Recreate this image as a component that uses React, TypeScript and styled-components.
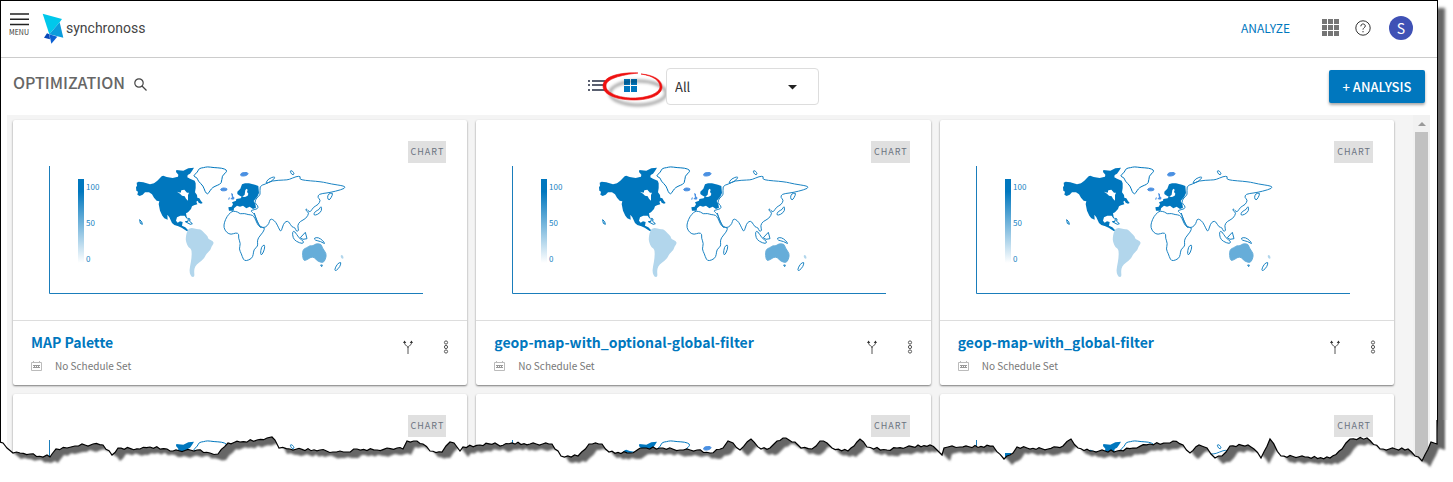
import React from "react";
import styled, { createGlobalStyle } from "styled-components";

const Global = createGlobalStyle`
  * { box-sizing: border-box; }
  body {
    margin: 0;
    background: #fff;
    font-family: "Noto Sans CJK SC", "Noto Sans", sans-serif;
    color: #555;
  }
  button, select { font-family: inherit; }
`;

const Page = styled.div`
  position: relative;
  height: 100vh;
  overflow: hidden;
  padding-right: 15px;
`;

const Sheet = styled.div`
  height: 100%;
  display: flex;
  flex-direction: column;
  border: 1px solid #000;
  border-bottom: 0;
  background: #fff;
  box-shadow: 7px 8px 3px #666;
`;

const Header = styled.header`
  display: flex;
  align-items: center;
  flex: none;
  height: 57px;
  padding: 0 24px 2px 5px;
  border-bottom: 1px solid #ccc;
`;

const IconButton = styled.button`
  display: flex;
  align-items: center;
  justify-content: center;
  flex: none;
  padding: 0;
  border: 0;
  background: none;
  color: inherit;
  cursor: pointer;
`;

const MenuButton = styled(IconButton)`
  flex-direction: column;
  gap: 2px;
  width: 26px;
  padding-bottom: 8px;
  font-size: 7px;
  line-height: 8px;
  color: #333;
`;

const Brand = styled.a`
  display: flex;
  align-items: center;
  gap: 2px;
  margin-left: 10px;
  text-decoration: none;
  color: #444;
  font: 14px/20px Roboto, "Liberation Sans", sans-serif;
`;

const HeaderNav = styled.nav`
  display: flex;
  align-items: center;
  gap: 15px;
  margin-left: auto;
`;

const NavLink = styled.a`
  margin-right: 17px;
  font-size: 12px;
  line-height: 20px;
  color: #0077be;
  text-decoration: none;
`;

const Avatar = styled.button`
  width: 24px;
  height: 24px;
  margin-left: 3px;
  padding: 0;
  border: 0;
  border-radius: 50%;
  background: #3f51b5;
  color: #fff;
  font-size: 14px;
  line-height: 24px;
`;

const Toolbar = styled.div`
  display: grid;
  grid-template-columns: 1fr auto 1fr;
  align-items: center;
  flex: none;
  height: 57px;
  padding: 0 12px;
`;

const TitleGroup = styled.div`
  display: flex;
  align-items: flex-end;
  gap: 9px;
  padding-bottom: 9px;
`;

const Title = styled.h1`
  margin: 0;
  font-size: 16px;
  line-height: 24px;
  font-weight: 500;
  color: #666;
`;

const SearchButton = styled(IconButton)`
  height: 20px;
`;

const ViewTools = styled.div`
  display: flex;
  align-items: center;
  padding-right: 32px;
`;

const ViewButtons = styled.div`
  display: flex;
  align-items: center;
  padding-bottom: 2px;
`;

const GridToggle = styled(IconButton)`
  position: relative;
  margin: 0 29px 0 18px;
`;

const Highlight = styled.svg`
  position: absolute;
  left: -24px;
  top: -8px;
  pointer-events: none;
`;

const SelectBox = styled.div`
  position: relative;
  svg {
    position: absolute;
    right: 22px;
    top: 17px;
    pointer-events: none;
  }
`;

const Select = styled.select`
  display: block;
  appearance: none;
  width: 153px;
  height: 37px;
  padding: 0 8px;
  border: 1px solid #ddd;
  border-radius: 4px;
  background: #fff;
  color: #333;
  font-size: 13px;
`;

const PrimaryButton = styled.button`
  justify-self: end;
  width: 96px;
  height: 33px;
  padding: 0;
  border: 0;
  border-radius: 2px;
  background: #0077be;
  color: #fff;
  font-size: 13px;
  line-height: 33px;
  font-weight: 500;
  box-shadow: 0 2px 3px rgba(0, 0, 0, 0.35);
`;

const Content = styled.main`
  display: flex;
  flex: 1;
  min-height: 0;
  margin: 0 7px 0 6px;
  background: #f4f4f4;
`;

const Grid = styled.div`
  flex: 1;
  min-width: 0;
  display: grid;
  grid-template-columns: repeat(3, minmax(0, 1fr));
  align-content: start;
  gap: 9px;
  padding: 5px 19px 0 6px;
  overflow: hidden;
`;

const Card = styled.article`
  background: #fff;
  border-radius: 2px;
  box-shadow: 0 1px 2px rgba(0, 0, 0, 0.5);
`;

const Preview = styled.div`
  position: relative;
  height: 201px;
  padding: 46px 43px 0 36px;
  border-bottom: 1px solid #ddd;
`;

const Tag = styled.span`
  position: absolute;
  right: 21px;
  top: 21px;
  height: 22px;
  padding: 0 2px 0 3px;
  background: #e0e0e0;
  color: #6b7380;
  font-size: 9px;
  line-height: 21px;
  letter-spacing: 1px;
`;

const CardFooter = styled.div`
  display: flex;
  align-items: flex-start;
  height: 64px;
  padding: 11px 18px 0 18px;
`;

const CardText = styled.div`
  flex: 1;
  min-width: 0;
`;

const CardTitle = styled.a`
  display: block;
  font-size: 14px;
  line-height: 20px;
  font-weight: 700;
  color: #0077be;
  text-decoration: none;
  white-space: nowrap;
`;

const Schedule = styled.div`
  display: flex;
  align-items: center;
  gap: 13px;
  margin-top: 5px;
  font-size: 10px;
  line-height: 18px;
  color: #777;
`;

const CardActions = styled.div`
  display: flex;
  gap: 30px;
  padding-top: 8px;
`;

const Scrollbar = styled.div`
  flex: none;
  display: flex;
  flex-direction: column;
  align-items: center;
  width: 17px;
  background: #f1f1f1;
`;

const ScrollArrow = styled.div`
  width: 0;
  height: 0;
  margin: 7px 0 6px;
  border: 4px solid transparent;
  border-top: 0;
  border-bottom-color: #9a9a9a;
`;

const ScrollThumb = styled.div`
  flex: 1;
  width: 13px;
  background: #c1c1c1;
`;

const TornEdge = styled.svg`
  position: absolute;
  left: 0;
  bottom: 0;
  width: 100%;
  height: 62px;
  pointer-events: none;
`;

type Point = [number, number];

const toPoints = (s: string): Point[] =>
  s.trim().split(/\s+/).map((p) => p.split(",").map(Number) as Point);

/** Closed outline whose corners are rounded through the edge midpoints. */
function blob(s: string): string {
  const pts = toPoints(s);
  const mid = (a: Point, b: Point) => `${(a[0] + b[0]) / 2},${(a[1] + b[1]) / 2}`;
  const last = pts[pts.length - 1];
  return (
    `M${mid(last, pts[0])}` +
    pts.map((p, i) => `Q${p[0]},${p[1]} ${mid(p, pts[(i + 1) % pts.length])}`).join("") +
    "Z"
  );
}

const poly = (s: string) => `M${toPoints(s).map((p) => p.join(",")).join("L")}Z`;

const NORTH_AMERICA =
  poly("20,74 26,71 40,73 60,79 72,76 82,68 95,55 100,53 110,57 128,60 144,56 145,50 138,42 139,36 160,38 175,31 192,29 186,39 180,47 173,51 172,58 180,62 194,68 197,76 197,90 195,103 201,111 202,119 208,121 213,129 218,135 213,137 206,134 203,128 199,131 202,139 192,142 186,145 183,153 174,163 168,166 170,177 175,183 169,181 164,173 151,173 141,178 138,188 143,194 150,190 158,192 156,203 166,208 176,218 170,219 155,209 145,205 133,201 126,195 118,178 112,170 113,185 103,181 97,173 90,158 86,138 88,130 80,128 72,119 66,109 57,103 45,103 38,110 29,114 22,110 24,101 19,98 18,88 21,83") +
  poly("141,101 152,104 154,97 163,95 171,104 177,104 174,111 174,128 168,122 164,115 156,113 150,107");
const SOUTH_AMERICA = blob("174,214 184,209 202,214 212,213 224,226 234,236 234,243 250,249 251,258 244,266 242,276 228,288 223,302 206,314 195,325 192,340 194,357 184,357 178,342 180,325 185,300 185,274 175,268 168,252 167,240 170,224");
const GREENLAND = blob("188,55 203,42 207,31 221,29 232,26 252,29 275,30 291,36 288,44 276,53 275,76 262,82 248,88 240,98 233,110 225,101 220,84 204,69 201,58");

const EUROPE =
  poly("10,148 20,146 24,139 21,133 33,128 34,123 47,121 50,116 42,112 37,108 37,101 46,92 51,79 60,76 72,76 90,80 100,84 102,105 97,116 86,129 91,138 93,149 84,153 74,146 64,151 54,143 45,146 36,143 27,151 26,158 12,158") +
  poly("61,97 64,92 68,95 66,102 70,107 68,113 60,117 52,116 59,110 60,103");
const AFRICA = blob("17,163 25,159 39,162 45,168 58,166 69,170 83,171 90,181 96,196 104,208 120,208 115,222 99,240 97,253 99,264 86,275 85,290 80,302 63,309 55,305 49,287 42,273 47,257 40,240 42,228 33,224 18,230 5,224 -4,209 -2,193 6,175");
const ASIA = blob("103,84 120,79 140,68 179,66 192,65 214,55 228,55 222,66 290,71 318,78 359,84 361,91 331,100 306,105 281,108 278,119 287,126 280,140 265,147 256,163 249,158 243,151 243,159 253,164 243,182 225,190 217,203 222,218 214,221 210,208 201,208 191,190 183,190 175,198 168,223 161,210 153,193 143,184 135,183 132,197 121,209 106,208 96,189 90,171 82,163 76,157 99,153 99,143 88,134 95,119 107,111");
const RED_SEA = "M88,165C92,183 100,199 107,209";

function WorldChart({ labels }: { labels: boolean }) {
  const id = React.useId();
  return (
    <svg viewBox="87 108 1125 384" width="375" height="128" role="img" aria-label="World map chart">
      <defs>
        <linearGradient id={id} x1="0" y1="0" x2="0" y2="1">
          <stop offset="0" stopColor="#0077be" />
          <stop offset="0.15" stopColor="#0077be" />
          <stop offset="1" stopColor="#fff" />
        </linearGradient>
      </defs>
      <path d="M88.500,108V490.500H1209" fill="none" stroke="#1a7dbb" strokeWidth="3" />
      <rect x="174" y="147" width="18" height="252" fill={`url(#${id})`} />
      {labels && (
        <g fill="#1a83c3" fontSize="24">
          <text x="198" y="180">100</text>
          <text x="198" y="288">50</text>
          <text x="198" y="395">0</text>
        </g>
      )}
      <g transform="translate(330 84)" fill="none" stroke="#0077be" strokeWidth="3">
        <path d={NORTH_AMERICA} fill="#0077be" fillRule="evenodd" stroke="none" />
        <path d={SOUTH_AMERICA} fill="#b2d6ec" stroke="none" />
        <path d={GREENLAND} />
        <path d={poly("166,191 174,190 175,181 180,183 179,190 187,197 181,199")} />
        <path d={poly("29,185 35,191 37,199 31,196")} />
        <path d={blob("270,94 279,89 293,92 289,98 276,99")} fill="#4a90e2" stroke="#4a90e2" />
      </g>
      <g transform="translate(615 84)" fill="none" stroke="#1a83c3" strokeWidth="3" strokeLinejoin="round">
        <path d={EUROPE} fill="#0077be" fillRule="evenodd" stroke="none" />
        <path d={AFRICA} />
        <path d={ASIA} />
        <path d={RED_SEA} />
        <path d={blob("121,77 130,62 151,55 146,65 131,74")} />
        <path d={blob("194,38 202,38 209,49 201,51")} />
        <path d={blob("307,120 310,107 325,104 318,120 312,127")} />
        <path d={blob("265,172 270,160 283,155 288,143 291,158 278,170")} />
        <path d={blob("106,289 109,266 119,259 119,273 111,291")} />
        <path d={blob("202,221 209,219 222,241 237,250 233,258 213,250 204,240")} />
        <path d={poly("226,239 241,223 246,242 234,244")} />
        <path d={blob("267,240 280,238 294,248 301,259 287,250 270,247")} />
        <path d={blob("328,337 336,318 349,311 345,326 334,338")} />
        <path d={poly("287,321 292,321 290,326")} />
        <path d={blob("232,275 246,269 254,263 264,264 272,257 289,258 291,269 305,287 301,305 294,315 277,309 268,298 258,297 247,305 234,309")} fill="#66add9" stroke="#66add9" />
        <path d={blob("346,292 353,290 357,302 349,302")} fill="#b2d6ec" stroke="none" />
        <path d={blob("46,50 50,44 69,43 69,50 60,54 48,54")} fill="#4a90e2" stroke="#4a90e2" />
        <path d={poly("18,105 24,108 24,115 29,120 25,125 16,123 21,118")} fill="#4a90e2" stroke="none" />
        <path d={poly("10,120 15,117 14,124 9,126")} fill="#7ab0ea" stroke="none" />
      </g>
    </svg>
  );
}

/** A card without a title is one that only peeks out above the torn edge. */
function AnalysisCard({ title }: { title?: string }) {
  return (
    <Card>
      <Preview>
        <WorldChart labels={Boolean(title)} />
        <Tag>CHART</Tag>
      </Preview>
      {title && (
        <CardFooter>
          <CardText>
            <CardTitle href="#">{title}</CardTitle>
            <Schedule>
              <svg width="11" height="10" fill="none" stroke="#bbb">
                <path d="M0.500,1.500H10.500V9.500H0.500ZM2.500,0V2M8.500,0V2" />
                <path d="M2,4.500H9M2,6.500H9M3.500,4V7M5.500,4V7M7.500,4V7" stroke="#999" />
              </svg>
              No Schedule Set
            </Schedule>
          </CardText>
          <CardActions>
            <IconButton aria-label="Fork">
              <svg width="10" height="14" fill="none" stroke="#555">
                <path d="M1.500,1V3C1.500,6 5,5 5,8V14M8.500,1V3C8.500,6 5,5 5,8" />
                <path d="M0,3L1.500,0.500L3.300,3ZM6.700,3L8.500,0.500L10,3Z" fill="#333" stroke="none" />
              </svg>
            </IconButton>
            <IconButton aria-label="More options">
              <svg width="6" height="14" fill="none" stroke="#555">
                <circle cx="3" cy="2.500" r="1.600" />
                <circle cx="3" cy="7" r="1.600" />
                <circle cx="3" cy="11.500" r="1.600" />
              </svg>
            </IconButton>
          </CardActions>
        </CardFooter>
      )}
    </Card>
  );
}

const TEAR = toPoints(`0,442 3,443 7,448 13,453 20,453 30,454 43,457 47,455 50,457 52,454 56,449 67,448 75,446 82,444
88,446 93,444 103,445 112,455 118,448 140,449 150,447 167,449 173,451 197,450 210,453 218,454 228,443 240,442 257,440
267,438 272,437 275,440 279,448 290,449 320,450 333,452 347,452 357,449 377,450 397,448 403,449 407,441 417,441 423,444
430,451 442,452 450,442 454,443 460,451 463,447 480,445 495,443 500,446 512,443 530,444 552,444 561,456 578,456 589,444
602,444 609,452 630,453 643,448 663,448 680,450 697,450 710,453 723,448 728,441 733,443 740,450 751,439 761,449 770,448
777,441 783,438 795,442 801,448 812,449 820,441 827,443 832,448 848,451 860,439 867,447 887,450 897,448 930,445 937,450
942,455 944,448 952,446 960,447 993,446 1004,459 1013,453 1017,447 1027,448 1048,449 1063,446 1071,439 1078,448 1090,451
1117,451 1133,448 1150,444 1167,443 1173,441 1183,445 1190,453 1199,445 1207,448 1215,458 1222,456 1230,446 1248,445
1254,449 1261,458 1270,439 1281,456 1305,457 1330,458 1342,449 1350,439 1367,438 1380,449 1408,449 1422,461 1431,442 1437,444`);

/** Adds a small repeatable roughness between the main points of the tear. */
function roughen(points: Point[]): string {
  const out: string[] = [];
  const steps = [0, -1, 0, 1, -1, 1, 0, 1, -1, 0, 1];
  let n = 0;
  points.forEach(([x, y], i) => {
    out.push(`${x},${y - 420}`);
    const next = points[i + 1];
    if (!next) return;
    const count = Math.floor((next[0] - x) / 3);
    for (let k = 1; k < count; k++) {
      const t = k / count;
      out.push(`${x + (next[0] - x) * t},${y - 420 + (next[1] - y) * t + steps[n++ % steps.length]}`);
    }
  });
  return out.join("L");
}

function Tear() {
  const line = roughen(TEAR);
  return (
    <TornEdge viewBox="0 0 1453 62" preserveAspectRatio="none" aria-hidden="true">
      <defs>
        <clipPath id="below">
          <path d={`M${line}L1438,0H1453V62H0Z`} />
        </clipPath>
        <filter id="soft" x="-5%" y="-50%" width="110%" height="200%">
          <feGaussianBlur stdDeviation="1.300" />
        </filter>
      </defs>
      <g clipPath="url(#below)">
        <rect width="1453" height="62" fill="#fff" />
        <path d={`M${line}V-30H0Z`} transform="translate(8 6)" fill="#666" filter="url(#soft)" />
      </g>
      <path d={`M${line}V0`} fill="none" stroke="#000" strokeWidth="1.200" />
    </TornEdge>
  );
}

const TITLES = ["MAP Palette", "geop-map-with_optional-global-filter", "geop-map-with_global-filter"];

export default function App() {
  return (
    <>
      <Global />
      <Page>
        <Sheet>
          <Header>
            <MenuButton>
              <svg width="19" height="13" stroke="#222" strokeWidth="1.500" aria-hidden="true">
                <path d="M0,1H19M0,6.200H19M0,11.400H19" />
              </svg>
              MENU
            </MenuButton>
            <Brand href="#">
              <svg width="22" height="31" viewBox="0 0 66 93" aria-hidden="true">
                <path d="M2,2L60,18L53,28L22,64Z" fill="#00c8eb" />
                <path d="M53,28L64,74L22,64Z" fill="#0b9cdc" />
                <path d="M22,64L46,71L28,92Z" fill="#0b5fd3" />
                <path d="M22,64L15,61L6,74L24,79Z" fill="#0849b8" />
              </svg>
              synchronoss
            </Brand>
            <HeaderNav>
              <NavLink href="#">ANALYZE</NavLink>
              <IconButton aria-label="Apps">
                <svg width="18" height="18" fill="#757575">
                  <path d="M0,0h5v5h-5zM6,0h5v5h-5zM12,0h5v5h-5zM0,6h5v5h-5zM6,6h5v5h-5zM12,6h5v5h-5zM0,12h5v5h-5zM6,12h5v5h-5zM12,12h5v5h-5z" />
                </svg>
              </IconButton>
              <IconButton aria-label="Help">
                <svg width="16" height="16" viewBox="0 0 16 16" fill="none" stroke="#333">
                  <circle cx="8" cy="8" r="7.200" />
                  <path d="M5.800,6.300C5.800,3.200 10.300,3.300 10.300,6C10.300,7.600 8,7.900 8,9.600M8,11V12.300" />
                </svg>
              </IconButton>
              <Avatar>S</Avatar>
            </HeaderNav>
          </Header>
          <Toolbar>
            <TitleGroup>
              <Title>OPTIMIZATION</Title>
              <SearchButton aria-label="Search">
                <svg width="13" height="13" fill="none" stroke="#444" strokeWidth="1.200">
                  <circle cx="5" cy="5" r="4.200" />
                  <path d="M8,8L12.500,12.500" />
                </svg>
              </SearchButton>
            </TitleGroup>
            <ViewTools>
              <ViewButtons>
                <IconButton aria-label="List view">
                  <svg width="19" height="13" fill="#5a6070">
                    <path d="M1,1h2v2h-2zM5,1h13v2h-13zM1,5h2v2h-2zM5,5h13v2h-13zM1,10h2v2h-2zM5,10h13v2h-13z" />
                  </svg>
                </IconButton>
                <GridToggle aria-label="Grid view">
                  <svg width="13" height="13" fill="#0077be">
                    <path d="M0,0h6v6h-6zM7,0h6v6h-6zM0,7h6v6h-6zM7,7h6v6h-6z" />
                  </svg>
                  <Highlight width="74" height="44" viewBox="0 0 74 44" fill="none">
                    <defs>
                      <filter id="ring" x="-20%" y="-30%" width="150%" height="170%">
                        <feGaussianBlur stdDeviation="1.800" />
                      </filter>
                    </defs>
                    <ellipse cx="38" cy="22" rx="28" ry="12" stroke="#000" strokeOpacity="0.35" strokeWidth="3" filter="url(#ring)" />
                    <path d="M38,2C18,1 3,6 3,15C3,25 20,29 34,29C50,29 62,24 62,16C62,9 54,4 41,3C54,5 60,10 60,16C59,23 46,27 33,27C19,27 6,22 6,15C6,8 20,4 38,2Z" fill="#ee1111" stroke="#ee1111" strokeWidth="0.600" />
                  </Highlight>
                </GridToggle>
              </ViewButtons>
              <SelectBox>
                <Select aria-label="Filter by type" defaultValue="All">
                  <option>All</option>
                </Select>
                <svg width="9" height="5" fill="#222">
                  <path d="M0,0H9L4.500,4.500Z" />
                </svg>
              </SelectBox>
            </ViewTools>
            <PrimaryButton>+ ANALYSIS</PrimaryButton>
          </Toolbar>
          <Content>
            <Grid>
              {TITLES.map((t) => (
                <AnalysisCard key={t} title={t} />
              ))}
              <AnalysisCard />
              <AnalysisCard />
              <AnalysisCard />
            </Grid>
            <Scrollbar>
              <ScrollArrow />
              <ScrollThumb />
            </Scrollbar>
          </Content>
        </Sheet>
        <Tear />
      </Page>
    </>
  );
}
